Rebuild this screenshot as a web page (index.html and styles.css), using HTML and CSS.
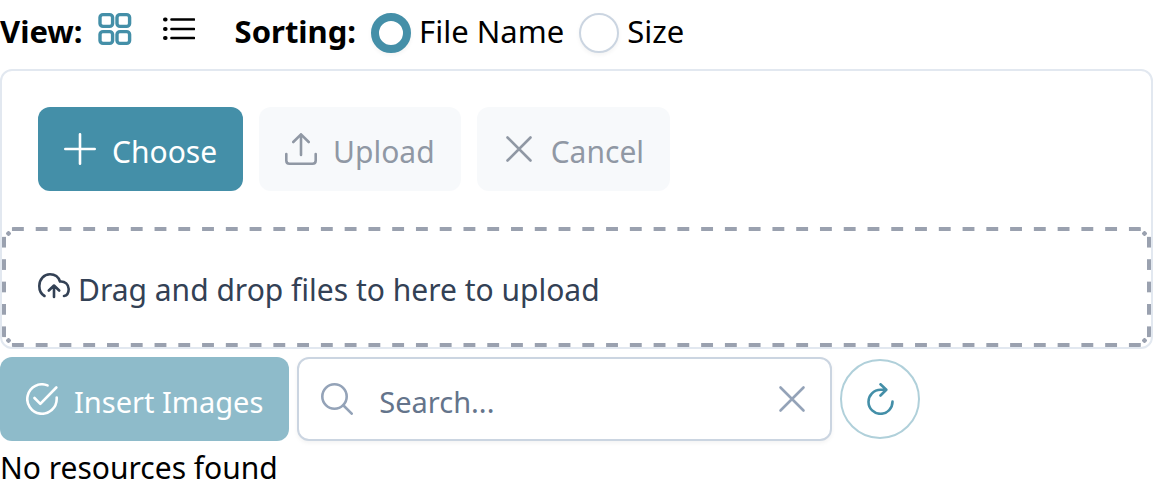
FILE: index.html
```
<!DOCTYPE html>
<html lang="en">
<head>
    <meta charset="UTF-8">
    <meta name="viewport" content="width=device-width, initial-scale=1.0">
    <title>Image Resources</title>
    <link rel="stylesheet" href="styles.css">
</head>
<body>
    <div class="options">
        <strong>View:</strong>
        <button class="view-button active" type="button" aria-label="Grid view">
            <svg class="icon" viewBox="0 0 32 32">
                <rect x="1" y="1.6" width="12.6" height="11.8" rx="3"/>
                <rect x="18" y="1.6" width="12.6" height="11.8" rx="3"/>
                <rect x="1" y="18.6" width="12.6" height="11.8" rx="3"/>
                <rect x="18" y="18.6" width="12.6" height="11.8" rx="3"/>
            </svg>
        </button>
        <button class="view-button" type="button" aria-label="List view">
            <svg class="icon" viewBox="0 0 32 32">
                <path d="M8.5 6.5H31M8.5 16H31M8.5 25H31"/>
                <path class="dots" d="M2 6.5h.6M2 16h.6M2 25h.6"/>
            </svg>
        </button>
        <strong class="sorting">Sorting:</strong>
        <input class="radio" type="radio" name="sorting" id="sort-name" checked>
        <label class="radio-label" for="sort-name">File Name</label>
        <input class="radio" type="radio" name="sorting" id="sort-size">
        <label class="radio-label" for="sort-size">Size</label>
    </div>

    <div class="upload">
        <div class="upload-header">
            <button class="button" type="button">
                <svg class="icon" viewBox="0 0 32 32"><path d="M16 1.3V30.7M1.3 16H30.7"/></svg>
                <span class="text">Choose</span>
            </button>
            <button class="button secondary" type="button" disabled>
                <svg class="icon" viewBox="0 0 32 32"><path d="M16 22V1.5M8.3 9L16 1.3L23.7 9M1.3 21V27.5Q1.3 30.7 4.5 30.7H27.5Q30.7 30.7 30.7 27.5V21"/></svg>
                <span class="text">Upload</span>
            </button>
            <button class="button secondary" type="button" disabled>
                <svg class="icon" viewBox="0 0 32 32"><path d="M4.5 4.5L27.5 27.5M27.5 4.5L4.5 27.5"/></svg>
                <span class="text">Cancel</span>
            </button>
        </div>
        <div class="dropzone">
            <svg class="icon" viewBox="0 0 32 32"><path d="M6.5 25C3 23 1.3 19.5 1.3 15C1.3 8 6 3.3 12 3.3C17 3.3 20.5 6 22 10.5C27 10 30.7 13.5 30.7 18C30.7 21.500 29 24.500 26 25M16 26V15M10.800 19.500L16 14.500L21.200 19.500"/></svg>
            <span class="text">Drag and drop files to here to upload</span>
        </div>
    </div>

    <div class="toolbar">
        <button class="button" type="button" disabled>
            <svg class="icon" viewBox="0 0 32 32"><path d="M30.7 14.5V16A14.7 14.7 0 1 1 21.5 2.4M30.3 4.5L14.3 20.8L8.5 15"/></svg>
            <span class="text">Insert Images</span>
        </button>
        <div class="search">
            <svg class="icon search-icon" viewBox="0 0 32 32"><circle cx="13.5" cy="13.5" r="12.2"/><path d="M22.5 22.5L30.7 30.7"/></svg>
            <input class="search-input" type="text" placeholder="Search..." aria-label="Search">
            <button class="clear" type="button" aria-label="Clear search">
                <svg class="icon" viewBox="0 0 32 32"><path d="M4.5 4.5L27.5 27.5M27.5 4.5L4.5 27.5"/></svg>
            </button>
        </div>
        <button class="refresh" type="button" aria-label="Refresh">
            <svg class="icon" viewBox="0 0 32 32"><path d="M22 6.8H16.5A12 12 0 1 0 28.5 18.5M16.5 1.3L22.3 6.8L16.5 12.5"/></svg>
        </button>
    </div>
    <div class="empty">No resources found</div>
</body>
</html>
```
FILE: styles.css
```
* {
    box-sizing: border-box;
}

body {
    margin: 0;
    background-color: #fff;
    color: #000;
    font-family: "Segoe UI", "Noto Sans", sans-serif;
    font-size: 30px;
    line-height: 40px;
}

button,
input {
    margin: 0;
    font: inherit;
}

.icon {
    display: block;
    flex: none;
    width: 32px;
    height: 32px;
    fill: none;
    stroke: currentColor;
    stroke-width: 2.6;
    stroke-linecap: round;
    stroke-linejoin: round;
}

.text {
    padding-top: 6px;
}

.options {
    display: flex;
    align-items: flex-start;
    padding: 13px 0 16px;
    font-size: 31px;
    line-height: 36px;
}

.view-button {
    margin-left: 16px;
    padding: 0;
    border: none;
    background: none;
    color: #000;
}

.view-button + .view-button {
    margin-left: 32px;
}

.view-button.active {
    color: #448fa8;
}

.view-button.active .icon {
    stroke-width: 3.4;
    overflow: visible;
}

.dots {
    stroke-width: 4;
}

.sorting {
    margin-left: 40px;
}

.radio {
    appearance: none;
    flex: none;
    width: 40px;
    height: 40px;
    margin-left: 15px;
    border: 2px solid #cbd5e1;
    border-radius: 50%;
    background-color: #fff;
    box-shadow: 0 2px 4px rgba(18, 18, 23, 0.05);
}

.radio:checked {
    border: 8px solid #448fa8;
}

.radio-label {
    margin-left: 8px;
}

.upload {
    border: 2px solid #e2e8f0;
    border-radius: 12px;
}

.upload-header {
    display: flex;
    gap: 16px;
    padding: 36px;
}

.button {
    display: flex;
    align-items: center;
    gap: 16px;
    height: 84px;
    padding: 0 26px;
    border: none;
    border-radius: 12px;
    background-color: #448fa8;
    color: #fff;
}

.button:disabled {
    opacity: 0.6;
}

.button.secondary {
    background-color: #f3f6fa;
    color: #475569;
}

/* wide dashes: tiled strips on each edge and a dot in each corner */
.dropzone {
    --dash: #9aa1af;
    --across: linear-gradient(90deg, transparent 25%, var(--dash) 25% 75%, transparent 75%);
    --down: linear-gradient(transparent 27%, var(--dash) 27% 73%, transparent 73%);
    --dot: radial-gradient(closest-side, var(--dash) 80%, transparent);
    display: flex;
    align-items: center;
    gap: 8px;
    padding: 33px 32px;
    border: 4px solid transparent;
    border-radius: 12px;
    background:
        var(--across) left 0 top -4px / 24px 4px round no-repeat,
        var(--across) left 0 bottom -4px / 24px 4px round no-repeat,
        var(--down) left -4px top 0 / 4px 22px no-repeat round,
        var(--down) right -4px top 0 / 4px 22px no-repeat round,
        var(--dot) left 0 top 0 / 5px 5px no-repeat,
        var(--dot) right 0 top 0 / 5px 5px no-repeat,
        var(--dot) left 0 bottom 0 / 5px 5px no-repeat,
        var(--dot) right 0 bottom 0 / 5px 5px no-repeat;
    background-clip: border-box;
    background-origin: padding-box;
    color: #334155;
}

.toolbar {
    display: flex;
    align-items: center;
    gap: 8px;
    padding-top: 8px;
    font-size: 29px;
}

.search {
    position: relative;
    flex: 0 1 535px;
}

.search-input {
    display: block;
    width: 100%;
    height: 84px;
    padding: 4px 80px 0;
    border: 2px solid #cbd5e1;
    border-radius: 12px;
    background-color: #fff;
    color: #334155;
    box-shadow: 0 2px 4px rgba(18, 18, 23, 0.05);
}

.search-input::placeholder {
    color: #64748b;
    opacity: 1;
}

/* both sit over the ends of the text box */
.search-icon,
.clear {
    position: absolute;
    top: 26px;
    color: #94a3b8;
}

.search-icon {
    left: 24px;
}

.clear {
    right: 24px;
    padding: 0;
    border: none;
    background: none;
}

.refresh {
    display: flex;
    align-items: center;
    justify-content: center;
    width: 80px;
    height: 80px;
    padding: 0;
    border: 2px solid #b0d0da;
    border-radius: 50%;
    background: none;
    color: #448fa8;
}

.empty {
    padding-top: 7px;
}
```
